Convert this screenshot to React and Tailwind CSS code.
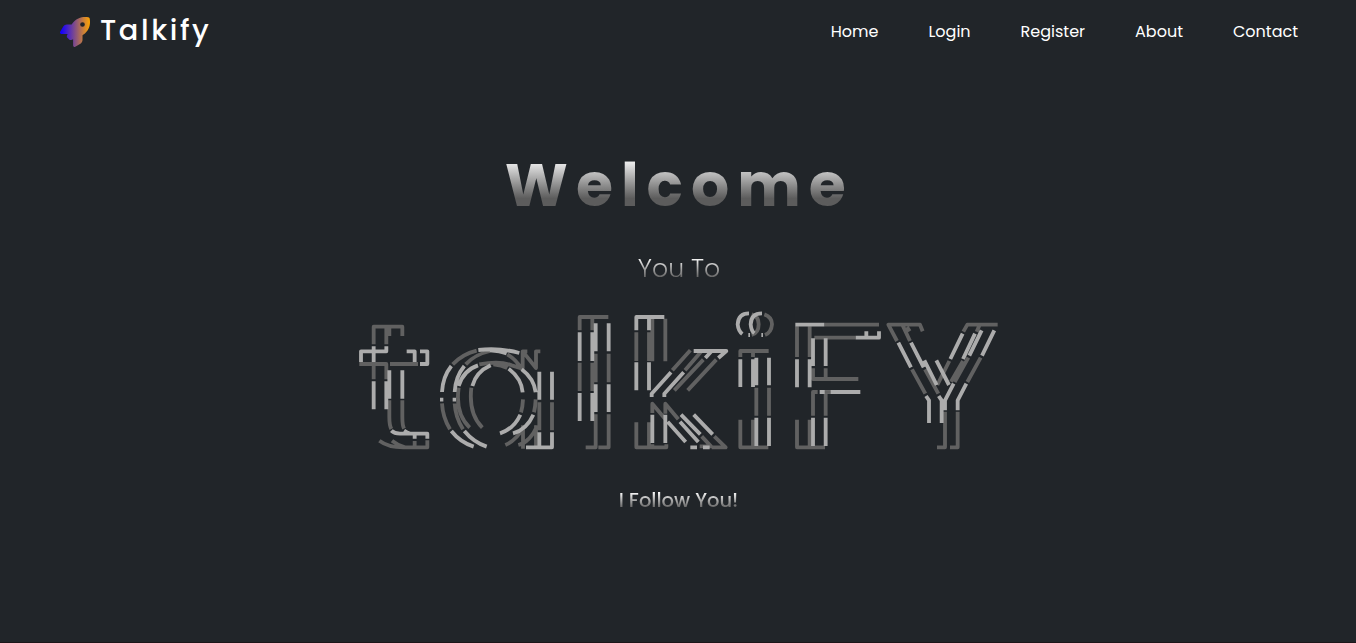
import React from "react";
import { FaRocket } from "react-icons/fa6";

const LINKS = ["Home", "Login", "Register", "About", "Contact"];

// Each glyph of the animated wordmark: x offset, then dim and bright dashes.
const GLYPHS = [
  {
    x: 0,
    dim: "M71 132V79H157V107M109 79V132M118 79V107M28 191H109V237M71 191V237M120 191H204M118 300V350Q118 375 124 386M157 300V350Q157 375 162 385M88 421Q115 441 160 441H232V420M126 421Q145 436 165 441M194 422V436",
    lit: "M33 185V153H109V138M71 138V185M170 153H194V185M210 153H232V191H210M71 243V327M109 243V327M118 210V295M157 210V295M124 391Q133 400 150 400H232V415M162 391Q172 398 180 400M194 405V415",
  },
  {
    x: 240,
    dim: "M68 192Q100 160 140 151M107 192Q135 162 180 152M232 162Q258 178 273 203M148 192Q210 180 245 195L277 205M190 192Q215 194 232 203M36 309Q38 350 60 387M74 309Q76 350 99 387M86 262Q75 340 119 382M124 262Q115 340 157 382M279 297Q278 320 273 336M317 297Q316 320 312 336M226 434Q260 420 284 376M265 434Q300 425 322 376M278 205V153H292M278 153L318 203V153H331M279 375V445M318 375V441",
    lit: "M36 275Q38 230 64 197M145 149Q210 142 268 158M180 150Q210 152 230 159M74 275Q76 230 103 197M86 257Q100 210 144 195M127 257Q138 215 182 195M236 205Q275 235 278 276M275 207Q312 235 317 276M30 298H40M68 298H78M64 392Q90 425 131 439M103 392Q130 425 170 439M271 343Q252 385 210 399M310 343Q290 388 249 399M328 214V298M366 214V298M288 441H366V396M328 396V436",
    over: "M328 306V390M366 306V390",
  },
  {
    x: 645,
    dim: "M44 90V50H130M82 50V90M44 187V272M82 187V272M92 160V246M131 160V246M62 441H92V342M100 441H131V342M214 96V182M252 96V182M262 55V183M301 55V183M376 150L322 210M410 152L360 210M415 178L328 270M454 178L368 270M262 338V310L300 355M301 340V310L340 357M410 408L438 438H404M448 408L482 441H440M214 366V441H304V432M252 366V441M262 432V441",
    lit: "M44 96V182M82 96V182M44 278V362M82 278V362M92 69V153M131 69V153M92 252V335M131 252V335M214 90V50H298M252 50V90M214 186V270M252 186V270M386 152H484L460 173M440 152L421 173M318 216L260 280V290M356 216L298 280V290M262 343V428M301 343V428M308 364L362 425M345 364L400 425M348 343L406 402M386 343L443 402M376 441H396M414 441H434",
  },
  {
    x: 1125,
    dim: "M80 42Q101 48 101 72Q101 98 80 104M118 42Q141 50 141 72Q139 96 120 104M46 170V152H131M84 152V170M94 262V346M132 262V346M46 358V441H130M84 358V441M298 73H462M216 78V170M254 78V170M268 112H392M264 204V236H400M302 204V236M264 346V275H278M302 280V346M216 358V441H300M254 358V441",
    lit: "M72 39Q40 39 38 72Q40 92 52 101M111 39Q78 39 77 72Q79 92 88 99M70 104H75M109 104H114M46 177V260M84 177V260M94 172V255M132 172V255M94 352V437M132 352V437M211 73H298M216 177V261M254 177V261M264 114V197M302 114V197M392 112H462V93M424 93V110M284 275H406M264 352V437M302 352V437",
    over: "M299 275H317",
  },
  {
    x: 1575,
    dim: "M66 122L40 73H135L143 93M82 73L105 122M96 80L104 93M111 207L151 280M150 207L190 280M265 94L277 73H368M314 73L305 94M223 182L187 254M264 182L228 244M280 172L239 245M317 172L277 245M210 334V441H186M248 334V441H225",
    lit: "M70 127L108 201M108 127L146 201M148 180L185 254M184 180L222 254M153 287L162 300V368M191 287L200 300V368M263 100L226 176M300 100L264 176M320 90L283 166M358 90L321 166M236 250L210 300V330M274 250L248 300V330",
  },
];

function Wordmark() {
  return (
    <svg
      role="img"
      viewBox="-12 0 1992 480"
      className="h-[160px] w-[664px] shrink-0"
      fill="none"
      strokeWidth="11.5"
      strokeLinejoin="round"
    >
      {GLYPHS.map((g) => (
        <g key={g.x} transform={`translate(${g.x} 1)`}>
          <path d={g.dim} stroke="#616161" />
          <path d={g.lit} stroke="#acacac" />
          {g.over && <path d={g.over} stroke="#616161" />}
        </g>
      ))}
    </svg>
  );
}

export default function App() {
  return (
    <div className="flex h-[643px] w-full flex-col overflow-hidden border-b border-[#1c1619] bg-[#212529] font-['Poppins','Inter',sans-serif] text-white">
      <header className="flex h-[62px] shrink-0 items-center justify-between pl-[60px] pr-[58px]">
        <div className="flex items-center">
          <svg className="absolute h-0 w-0">
            <defs>
              <linearGradient id="flame" x1="0" x2="1" y1="0" y2="0">
                <stop offset="0.05" stopColor="#1400ff" />
                <stop offset="1" stopColor="#ffa500" />
              </linearGradient>
            </defs>
          </svg>
          <FaRocket className="mt-px h-[30px] w-[30px]" fill="url(#flame)" />
          <span className="-mt-[2px] ml-[10px] whitespace-nowrap text-[28.8px] font-medium leading-[40px] tracking-[2.6px]">Talkify</span>
        </div>
        <nav className="flex gap-[50px] pt-[2px] text-[16px] leading-6">
          {LINKS.map((label) => (
            <a key={label} className="whitespace-nowrap">{label}</a>
          ))}
        </nav>
      </header>
      <main className="flex flex-col items-center">
        <h1 className="mt-[78px] h-[90px] whitespace-nowrap bg-linear-to-b from-white from-20% to-[#5c5c5c] to-65% bg-clip-text pl-[2.5px] text-[60px] font-bold leading-[90px] tracking-[8px] text-transparent">Welcome</h1>
        <p className="mt-[20px] h-[38px] whitespace-nowrap bg-linear-to-b from-white from-20% to-[#5c5c5c] to-75% bg-clip-text pl-[2px] text-[25.2px] font-light leading-[38px] text-transparent">You To</p>
        <div className="mt-[12px] flex">
          <Wordmark />
        </div>
        <p className="mt-[26px] h-[30px] whitespace-nowrap bg-linear-to-b from-white from-20% to-[#5c5c5c] to-75% bg-clip-text pl-px text-[19.5px] font-medium leading-[30px] text-transparent">I Follow You!</p>
      </main>
    </div>
  );
}
